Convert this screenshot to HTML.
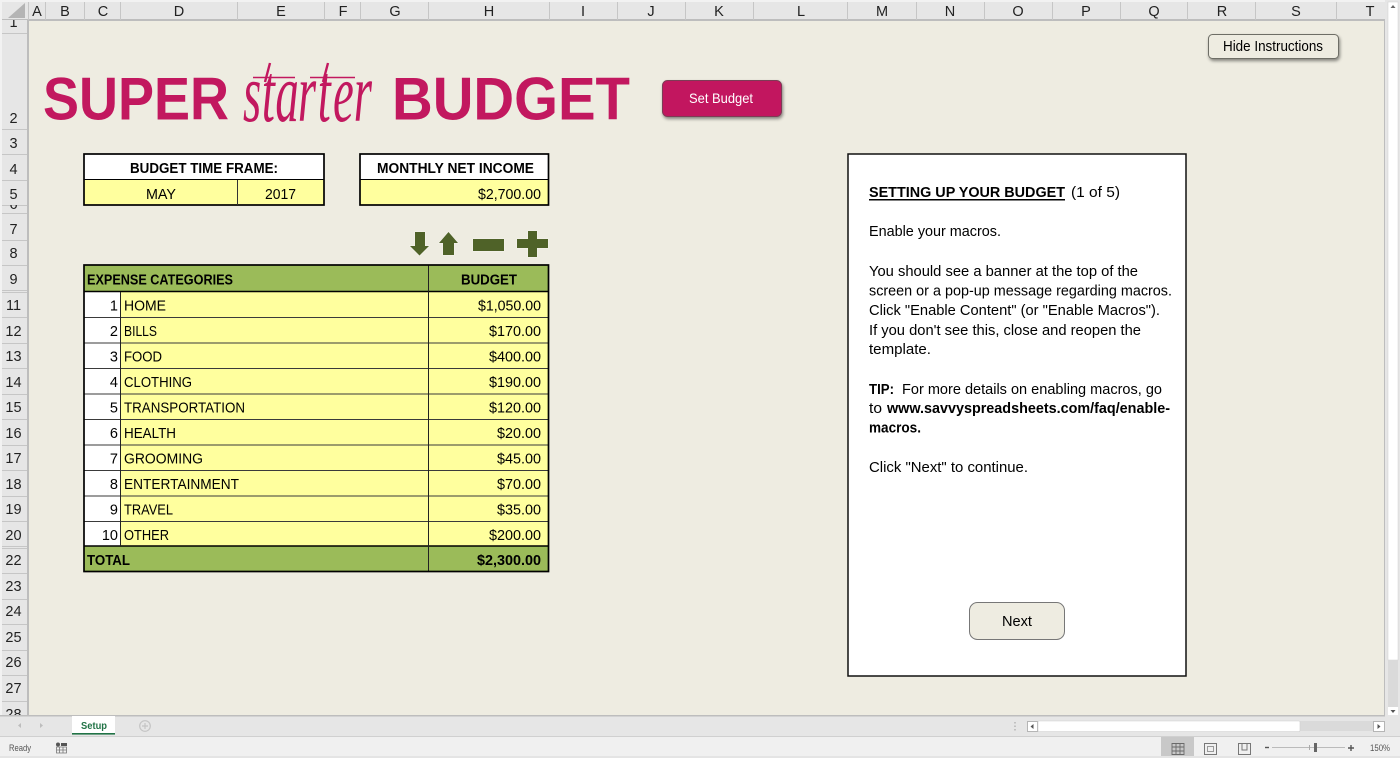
<!DOCTYPE html>
<html lang="en"><head><meta charset="utf-8"><title>Super Starter Budget</title>
<style>
html,body{margin:0;padding:0;width:1400px;height:758px;overflow:hidden;background:#EEECE1}
svg{display:block;position:absolute;left:0;top:0}
text{font-family:"Liberation Sans",sans-serif;font-size:14.5px;fill:#000}
.b{font-weight:700}
.h{fill:#222;text-anchor:middle;font-size:14.5px}
.r{text-anchor:end}
</style></head><body>
<svg width="1400" height="758" viewBox="0 0 1400 758" xmlns="http://www.w3.org/2000/svg">
<defs>
<filter id="sh" x="-10%" y="-20%" width="120%" height="150%"><feDropShadow dx="1" dy="2" stdDeviation="1.6" flood-color="#000" flood-opacity=".45"/></filter>
<clipPath id="c1"><rect x="0" y="20" width="28" height="13"/></clipPath>
<clipPath id="c6"><rect x="0" y="205" width="28" height="8"/></clipPath>
<clipPath id="c28"><rect x="0" y="700" width="28" height="15"/></clipPath>
</defs>
<rect width="1400" height="758" fill="#EEECE1"/>

<!-- column header -->
<rect x="0" y="0" width="1400" height="20" fill="#E6E6E6"/>
<rect x="0" y="0" width="1400" height="2" fill="#F2F2F2"/>
<rect x="0" y="19" width="1385" height="2" fill="#BDBDBD"/>
<path d="M8 18H25V3Z" fill="#B4B4B4"/>
<g stroke="#C6C6C6" stroke-width="1">
<path d="M28.5 2V20M45.5 2V20M84.5 2V20M120.5 2V20M237.5 2V20M324.5 2V20M360.5 2V20M428.5 2V20M549.5 2V20M617.5 2V20M685.5 2V20M753.5 2V20M847.5 2V20M916.5 2V20M984.5 2V20M1052.5 2V20M1120.5 2V20M1187.5 2V20M1255.5 2V20M1336.5 2V20"/>
</g>
<g>
<text class="h" x="37" y="16">A</text><text class="h" x="65" y="16">B</text><text class="h" x="103" y="16">C</text><text class="h" x="179" y="16">D</text><text class="h" x="281" y="16">E</text><text class="h" x="343" y="16">F</text><text class="h" x="395" y="16">G</text><text class="h" x="489" y="16">H</text><text class="h" x="583" y="16">I</text><text class="h" x="651" y="16">J</text><text class="h" x="719" y="16">K</text><text class="h" x="801" y="16">L</text><text class="h" x="882" y="16">M</text><text class="h" x="950" y="16">N</text><text class="h" x="1018" y="16">O</text><text class="h" x="1086" y="16">P</text><text class="h" x="1154" y="16">Q</text><text class="h" x="1222" y="16">R</text><text class="h" x="1296" y="16">S</text><text class="h" x="1370" y="16">T</text>
</g>

<!-- row header -->
<rect x="0" y="20" width="28" height="696" fill="#E6E6E6"/>
<rect x="0" y="0" width="2" height="716" fill="#F2F2F2"/>
<rect x="27" y="20" width="2" height="696" fill="#BDBDBD"/>
<path d="M2 33.5H27M2 129.5H27M2 154.5H27M2 180.5H27M2 205.5H27M2 213.5H27M2 240.5H27M2 265.5H27M2 290.5H27M2 292.5H27M2 317.5H27M2 343.5H27M2 368.5H27M2 394.5H27M2 419.5H27M2 445.5H27M2 470.5H27M2 496.5H27M2 521.5H27M2 546.5H27M2 548.5H27M2 573.5H27M2 599.5H27M2 624.5H27M2 650.5H27M2 675.5H27M2 701.5H27" stroke="#C6C6C6" fill="none"/>
<g>
<text class="h" x="13.5" y="27" clip-path="url(#c1)">1</text>
<text class="h" x="13.5" y="123">2</text><text class="h" x="13.5" y="148">3</text><text class="h" x="13.5" y="174">4</text><text class="h" x="13.5" y="199">5</text>
<text class="h" x="13.5" y="209" clip-path="url(#c6)">6</text>
<text class="h" x="13.5" y="234">7</text><text class="h" x="13.5" y="258">8</text><text class="h" x="13.5" y="284">9</text>
<text class="h" x="13.5" y="310">11</text><text class="h" x="13.5" y="336">12</text><text class="h" x="13.5" y="361">13</text><text class="h" x="13.5" y="387">14</text><text class="h" x="13.5" y="412">15</text><text class="h" x="13.5" y="438">16</text><text class="h" x="13.5" y="463">17</text><text class="h" x="13.5" y="489">18</text><text class="h" x="13.5" y="514">19</text><text class="h" x="13.5" y="540">20</text><text class="h" x="13.5" y="565">22</text><text class="h" x="13.5" y="591">23</text><text class="h" x="13.5" y="616">24</text><text class="h" x="13.5" y="642">25</text><text class="h" x="13.5" y="667">26</text><text class="h" x="13.5" y="693">27</text>
<text class="h" x="13.5" y="719" clip-path="url(#c28)">28</text>
</g>

<!-- title -->
<text class="b" x="43" y="119.5" style="font-size:60px;fill:#C2185F" textLength="186" lengthAdjust="spacingAndGlyphs">SUPER</text>
<text class="b" x="392" y="119.5" style="font-size:60px;fill:#C2185F" textLength="238" lengthAdjust="spacingAndGlyphs">BUDGET</text>
<text transform="translate(243 121) scale(.9 1.6)" x="0 21 36 61 83 100 123" y="0" style="font-family:'Liberation Serif',serif;font-style:italic;font-size:52px;fill:#C2185F">starter</text>
<path d="M253 77.5H295M310 77.5H355" stroke="#C2185F" stroke-width="1.6" fill="none"/>
<path d="M270 63L265 82M328 63L323 82" stroke="#C2185F" stroke-width="2.4" fill="none"/>

<!-- Set Budget -->
<rect x="662.5" y="80.5" width="119" height="36" rx="5" fill="#C2185F" stroke="#7d3a55" filter="url(#sh)"/>
<text x="689" y="103" style="fill:#fff;font-size:14px" textLength="64" lengthAdjust="spacingAndGlyphs">Set Budget</text>

<!-- Hide Instructions -->
<rect x="1208.5" y="34.5" width="130" height="24" rx="4" fill="#EEECE1" stroke="#6e6e66" filter="url(#sh)"/>
<text x="1223" y="51" textLength="100" lengthAdjust="spacingAndGlyphs">Hide Instructions</text>

<!-- Budget time frame -->
<rect x="84" y="154" width="240" height="51" fill="#FFFF9E"/>
<rect x="84" y="154" width="240" height="25" fill="#fff"/>
<rect x="84" y="154" width="240" height="51" fill="none" stroke="#000" stroke-width="1.7"/>
<path d="M84 179.5H324" stroke="#000" stroke-width="1"/>
<path d="M237.5 180V205" stroke="#333" stroke-width="1"/>
<text class="b" x="130" y="173" textLength="148" lengthAdjust="spacingAndGlyphs">BUDGET TIME FRAME:</text>
<text x="146" y="199" textLength="30" lengthAdjust="spacingAndGlyphs">MAY</text>
<text x="265" y="199" textLength="31" lengthAdjust="spacingAndGlyphs">2017</text>

<!-- Monthly net income -->
<rect x="360" y="154" width="188.5" height="51" fill="#FFFF9E"/>
<rect x="360" y="154" width="188.5" height="25" fill="#fff"/>
<rect x="360" y="154" width="188.5" height="51" fill="none" stroke="#000" stroke-width="1.7"/>
<path d="M360 179.5H548.5" stroke="#000" stroke-width="1"/>
<text class="b" x="377" y="173" textLength="157" lengthAdjust="spacingAndGlyphs">MONTHLY NET INCOME</text>
<text x="478" y="199" textLength="63" lengthAdjust="spacingAndGlyphs">$2,700.00</text>

<!-- icons -->
<g fill="#4F6228" stroke="#fff" stroke-opacity=".55" stroke-width=".8" paint-order="stroke">
<path d="M415 232H425V246H429L419.5 255.5L410 246H415Z"/>
<path d="M448.5 232L458 243H454V255H443V243H439Z"/>
<rect x="473" y="239" width="31" height="12"/>
<path d="M528 231H537V239H548V248H537V257H528V248H517V239H528Z"/>
</g>

<!-- expense table -->
<rect x="84" y="265" width="464.5" height="27" fill="#9BBB59"/>
<rect x="84" y="292" width="37" height="254" fill="#fff"/>
<rect x="121" y="292" width="427.5" height="254" fill="#FFFF9E"/>
<rect x="84" y="546" width="464.5" height="26" fill="#9BBB59"/>
<path d="M84 317.5H548M84 343H548M84 368.5H548M84 394H548M84 419.5H548M84 445H548M84 470.5H548M84 496H548M84 521.5H548" stroke="#3a3a3a" stroke-width="1"/>
<path d="M84 291.5H548M84 546H548" stroke="#000" stroke-width="1.4"/>
<path d="M120.5 292V546M428.5 265V572" stroke="#222" stroke-width="1"/>
<rect x="84" y="265" width="464.5" height="306.5" fill="none" stroke="#000" stroke-width="1.7"/>

<text class="b" x="87" y="284.5" textLength="146" lengthAdjust="spacingAndGlyphs">EXPENSE CATEGORIES</text>
<text class="b" x="461" y="284.5" textLength="56" lengthAdjust="spacingAndGlyphs">BUDGET</text>

<g>
<text class="r" x="118" y="310.5">1</text><text x="124" y="310.5" textLength="42" lengthAdjust="spacingAndGlyphs">HOME</text><text x="478" y="310.5" textLength="63" lengthAdjust="spacingAndGlyphs">$1,050.00</text>
<text class="r" x="118" y="336">2</text><text x="124" y="336" textLength="33" lengthAdjust="spacingAndGlyphs">BILLS</text><text x="489" y="336" textLength="52" lengthAdjust="spacingAndGlyphs">$170.00</text>
<text class="r" x="118" y="361.5">3</text><text x="124" y="361.5" textLength="38" lengthAdjust="spacingAndGlyphs">FOOD</text><text x="489" y="361.5" textLength="52" lengthAdjust="spacingAndGlyphs">$400.00</text>
<text class="r" x="118" y="387">4</text><text x="124" y="387" textLength="68" lengthAdjust="spacingAndGlyphs">CLOTHING</text><text x="489" y="387" textLength="52" lengthAdjust="spacingAndGlyphs">$190.00</text>
<text class="r" x="118" y="412.5">5</text><text x="124" y="412.5" textLength="121" lengthAdjust="spacingAndGlyphs">TRANSPORTATION</text><text x="489" y="412.5" textLength="52" lengthAdjust="spacingAndGlyphs">$120.00</text>
<text class="r" x="118" y="438">6</text><text x="124" y="438" textLength="52" lengthAdjust="spacingAndGlyphs">HEALTH</text><text x="497" y="438" textLength="44" lengthAdjust="spacingAndGlyphs">$20.00</text>
<text class="r" x="118" y="463.5">7</text><text x="124" y="463.5" textLength="79" lengthAdjust="spacingAndGlyphs">GROOMING</text><text x="497" y="463.5" textLength="44" lengthAdjust="spacingAndGlyphs">$45.00</text>
<text class="r" x="118" y="489">8</text><text x="124" y="489" textLength="115" lengthAdjust="spacingAndGlyphs">ENTERTAINMENT</text><text x="497" y="489" textLength="44" lengthAdjust="spacingAndGlyphs">$70.00</text>
<text class="r" x="118" y="514.5">9</text><text x="124" y="514.5" textLength="49" lengthAdjust="spacingAndGlyphs">TRAVEL</text><text x="497" y="514.5" textLength="44" lengthAdjust="spacingAndGlyphs">$35.00</text>
<text class="r" x="118" y="540">10</text><text x="124" y="540" textLength="45" lengthAdjust="spacingAndGlyphs">OTHER</text><text x="489" y="540" textLength="52" lengthAdjust="spacingAndGlyphs">$200.00</text>
<text class="b" x="87" y="565" textLength="43" lengthAdjust="spacingAndGlyphs">TOTAL</text><text class="b" x="477" y="565" textLength="64" lengthAdjust="spacingAndGlyphs">$2,300.00</text>
</g>

<!-- instructions panel -->
<rect x="848" y="154" width="338" height="522" fill="#fff" stroke="#111" stroke-width="1.5"/>
<text class="b" x="869" y="197" textLength="196" lengthAdjust="spacingAndGlyphs">SETTING UP YOUR BUDGET</text>
<rect x="869" y="199" width="196" height="1.5" fill="#000"/>
<text x="1071" y="197" textLength="49" lengthAdjust="spacingAndGlyphs">(1 of 5)</text>
<text x="869" y="236" textLength="132" lengthAdjust="spacingAndGlyphs">Enable your macros.</text>
<text x="869" y="276" textLength="269" lengthAdjust="spacingAndGlyphs">You should see a banner at the top of the</text>
<text x="869" y="295.5" textLength="303" lengthAdjust="spacingAndGlyphs">screen or a pop-up message regarding macros.</text>
<text x="869" y="315" textLength="291" lengthAdjust="spacingAndGlyphs">Click "Enable Content" (or "Enable Macros").</text>
<text x="869" y="335" textLength="272" lengthAdjust="spacingAndGlyphs">If you don't see this, close and reopen the</text>
<text x="869" y="354" textLength="62" lengthAdjust="spacingAndGlyphs">template.</text>
<text class="b" x="869" y="394" textLength="25" lengthAdjust="spacingAndGlyphs">TIP:</text>
<text x="902" y="394" textLength="260" lengthAdjust="spacingAndGlyphs">For more details on enabling macros, go</text>
<text x="869" y="413" textLength="13" lengthAdjust="spacingAndGlyphs">to</text>
<text class="b" x="887" y="413" textLength="283" lengthAdjust="spacingAndGlyphs">www.savvyspreadsheets.com/faq/enable-</text>
<text class="b" x="869" y="432.5" textLength="52" lengthAdjust="spacingAndGlyphs">macros.</text>
<text x="869" y="472" textLength="159" lengthAdjust="spacingAndGlyphs">Click "Next" to continue.</text>
<rect x="969.5" y="602.5" width="95" height="37" rx="8" fill="#EEECE1" stroke="#777"/>
<text x="1002" y="626" textLength="30" lengthAdjust="spacingAndGlyphs">Next</text>

<!-- grid frame + vertical scroll -->
<rect x="1385" y="0" width="15" height="716" fill="#E6E6E6"/>
<rect x="1384" y="20" width="1" height="696" fill="#BDBDBD"/>
<rect x="1388" y="2" width="10" height="658" fill="#fff" stroke="#d0d0d0" stroke-width=".5"/>
<path d="M1390.5 8L1393 5L1395.5 8Z" fill="#666"/>
<rect x="1388" y="660" width="10" height="47" fill="#DADADA"/>
<rect x="1388" y="707" width="10" height="8" fill="#fff"/>
<path d="M1390.5 710L1393 713L1395.5 710Z" fill="#555"/>

<!-- tab bar -->
<rect x="0" y="716" width="1400" height="20" fill="#E6E6E6"/>
<rect x="0" y="715" width="1385" height="1.5" fill="#BDBDBD"/>
<path d="M18 725.5L21 723V728Z M43 725.5L40 723V728Z" fill="#bdbdbd"/>
<rect x="72" y="716" width="43" height="17" fill="#fff"/>
<rect x="72" y="733" width="43" height="1.6" fill="#217346"/>
<text class="b" x="81" y="729" style="font-size:10.5px;fill:#217346" textLength="26" lengthAdjust="spacingAndGlyphs">Setup</text>
<circle cx="145" cy="726" r="5.3" fill="none" stroke="#c4c4c4" stroke-width="1.2"/>
<path d="M145 723V729M142 726H148" stroke="#c4c4c4" stroke-width="1.2"/>
<path d="M1015 722v1.5M1015 725.5v1.5M1015 729v1.5" stroke="#a8a8a8" stroke-width="1.2"/>
<rect x="1027" y="721" width="358" height="10" fill="#DADADA"/>
<rect x="1027.5" y="721.5" width="10" height="10" fill="#fff" stroke="#b5b5b5"/>
<path d="M1033.5 724L1030.5 726.5L1033.5 729Z" fill="#555"/>
<rect x="1038" y="721" width="262" height="10.5" rx="1" fill="#fff" stroke="#d0d0d0" stroke-width=".6"/>
<rect x="1373.5" y="721.5" width="11" height="10" fill="#fff" stroke="#b5b5b5"/>
<path d="M1377.5 724L1380.5 726.5L1377.5 729Z" fill="#555"/>

<!-- status bar -->
<rect x="0" y="736" width="1400" height="20" fill="#F0F0F0"/>
<rect x="0" y="736" width="1400" height="1" fill="#D0D0D0"/>
<rect x="0" y="756" width="1400" height="2" fill="#E4E4E4"/>
<text x="9" y="751" style="font-size:9.5px;fill:#555" textLength="22" lengthAdjust="spacingAndGlyphs">Ready</text>
<circle cx="58" cy="744.5" r="2" fill="#555"/>
<path d="M61 743h6v3h-6z" fill="#555"/>
<path d="M56.5 747H66.5V753H56.5Z M59.5 747V753M63 747V753M56.5 750H66.5" fill="none" stroke="#777" stroke-width=".8"/>
<rect x="1161" y="737" width="33" height="19" fill="#C8C8C8"/>
<path d="M1172 743.5H1184V754.5H1172Z M1176 743.5V754.5M1180 743.5V754.5M1172 747H1184M1172 751H1184" fill="none" stroke="#6a6a6a" stroke-width=".9"/>
<rect x="1204.5" y="743.5" width="12" height="11" fill="none" stroke="#777"/>
<rect x="1207.5" y="746.5" width="6" height="5" fill="none" stroke="#999"/>
<path d="M1238.5 743.5H1250.5V754.5H1238.5Z M1242 743.5V750H1247V743.5" fill="none" stroke="#777"/>
<path d="M1265 747.5H1269" stroke="#555" stroke-width="1.4"/>
<path d="M1272 747.5H1345" stroke="#bbb"/>
<path d="M1309.5 745V750" stroke="#aaa"/>
<rect x="1314" y="743" width="3" height="9" fill="#666"/>
<path d="M1348 748H1354M1351 745V751" stroke="#555" stroke-width="1.4"/>
<text x="1370" y="751" style="font-size:9.5px;fill:#555" textLength="20" lengthAdjust="spacingAndGlyphs">150%</text>
</svg>
</body></html>
